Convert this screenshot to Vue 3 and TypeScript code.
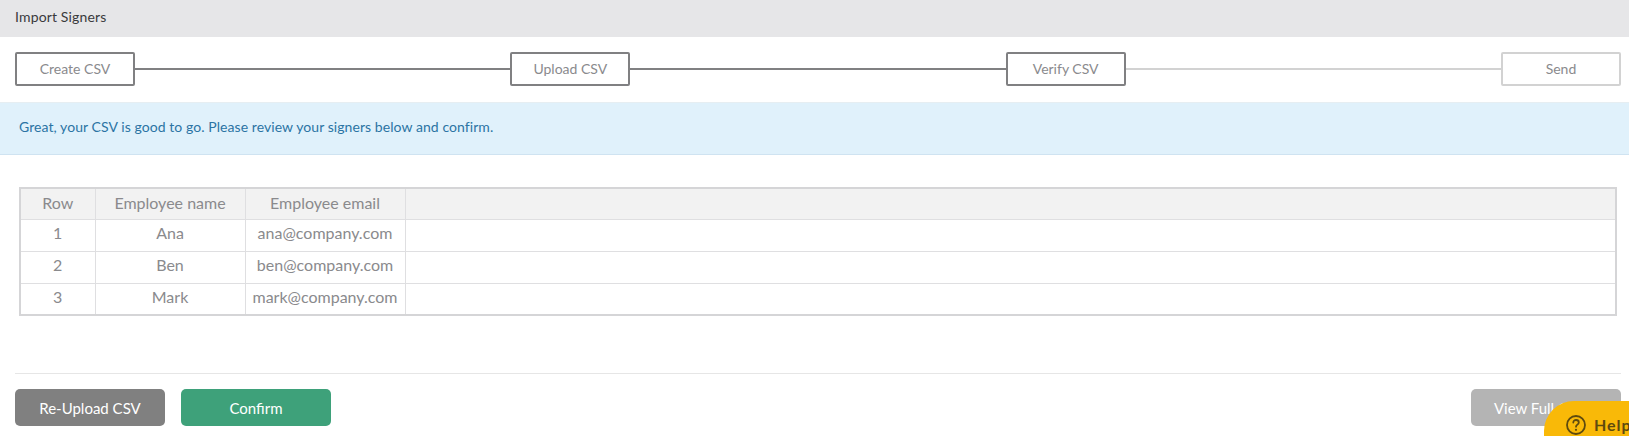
<script setup lang="ts">
interface StepItem { label: string; active: boolean; lineActive: boolean }
const steps: StepItem[] = [
  { label: 'Create CSV', active: true, lineActive: true },
  { label: 'Upload CSV', active: true, lineActive: true },
  { label: 'Verify CSV', active: true, lineActive: false },
  { label: 'Send', active: false, lineActive: false },
]
const rows = [
  { id: 1, name: 'Ana', email: 'ana@company.com' },
  { id: 2, name: 'Ben', email: 'ben@company.com' },
  { id: 3, name: 'Mark', email: 'mark@company.com' },
]
</script>

<template>
  <div class="page">
    <header class="title">Import Signers</header>
    <div class="stepper">
      <template v-for="(s, i) in steps" :key="s.label">
        <div class="step" :class="{ on: s.active }">{{ s.label }}</div>
        <div v-if="i < steps.length - 1" class="line" :class="{ on: s.lineActive }"></div>
      </template>
    </div>
    <div class="banner">Great, your CSV is good to go. Please review your signers below and confirm.</div>
    <div class="table-wrap">
      <table>
        <colgroup>
          <col class="c1" /><col class="c2" /><col class="c3" /><col />
        </colgroup>
        <thead>
          <tr><th>Row</th><th>Employee name</th><th>Employee email</th><th></th></tr>
        </thead>
        <tbody>
          <tr v-for="r in rows" :key="r.id">
            <td>{{ r.id }}</td><td>{{ r.name }}</td><td>{{ r.email }}</td><td></td>
          </tr>
        </tbody>
      </table>
    </div>
    <footer class="actions">
      <button class="btn grey">Re-Upload CSV</button>
      <button class="btn green">Confirm</button>
      <button class="btn light">View Full CSV</button>
    </footer>
    <div class="help">
      <svg width="22" height="22" viewBox="0 0 22 22" fill="none">
        <circle cx="11" cy="11" r="9" stroke="#5e4a0f" stroke-width="1.8" />
        <path d="M8.3 8.6c0-1.6 1.2-2.6 2.8-2.6 1.5 0 2.7 1 2.7 2.4 0 2.2-2.8 2.2-2.8 4.3" stroke="#5e4a0f" stroke-width="1.8" stroke-linecap="round" />
        <circle cx="11" cy="15.8" r="1.1" fill="#5e4a0f" />
      </svg>
      <span>Help</span>
    </div>
  </div>
</template>

<style>
html, body { margin: 0; background: #fff; overflow: hidden; }
</style>

<style scoped>
.page {
  position: relative;
  width: 1629px;
  height: 436px;
  overflow: hidden;
  font-family: Lato, "Liberation Sans", sans-serif;
  color: #8a8a8d;
  background: #fff;
}
.title {
  height: 37px;
  padding-left: 15px;
  background: #e6e6e8;
  color: #3a3a3c;
  font-size: 14px;
  letter-spacing: 0.15px;
  line-height: 33px;
  box-sizing: border-box;
}
.stepper {
  display: flex;
  align-items: center;
  padding: 15px 8px 16px 15px;
}
.step {
  width: 120px;
  height: 34px;
  box-sizing: border-box;
  flex: none;
  border: 2px solid #d2d2d2;
  border-radius: 2px;
  font-size: 14px;
  line-height: 29px;
  text-align: center;
}
.step.on { border-color: #808082; }
.line { flex: 1; height: 2px; background: #d2d2d2; }
.line.on { background: #808082; }
.banner {
  height: 53px;
  box-sizing: border-box;
  padding-left: 19px;
  background: #e0f1fb;
  border-top: 1px solid #e6eef2;
  border-bottom: 1px solid #cfe3f1;
  color: #2b74a4;
  font-size: 14px;
  letter-spacing: 0.07px;
  line-height: 47px;
}
.table-wrap { padding: 32px 12px 0 19px; }
table {
  width: 1598px;
  table-layout: fixed;
  border-collapse: collapse;
  border: 2px solid #d5d5d7;
  font-size: 16px;
  box-sizing: border-box;
}
.c1 { width: 75px; }
.c2 { width: 150px; }
.c3 { width: 160px; }
th, td {
  border: 1px solid #dfdfe1;
  padding: 0 0 3px;
  text-align: center;
  font-weight: 400;
  white-space: nowrap;
  color: #8a8a8d;
  box-sizing: border-box;
}
td { padding-bottom: 5px; }
th { background: #f2f2f2; height: 31px; }
td { height: 32px; }
.actions {
  display: flex;
  gap: 16px;
  margin: 57px 8px 0 15px;
  padding-top: 15px;
  border-top: 1px solid #e6e6e6;
}
.btn {
  width: 150px;
  height: 37px;
  border: 0;
  border-radius: 5px;
  padding: 0;
  color: #fff;
  font-family: inherit;
  font-size: 15px;
}
.grey { background: #808080; }
.green { background: #3ea17a; }
.light { background: #b4b4b4; margin-left: auto; padding-right: 12px; }
.help {
  position: absolute;
  left: 1544px;
  top: 401px;
  width: 110px;
  height: 60px;
  border-radius: 30px 0 0 0;
  background: #f9b908;
  display: flex;
  align-items: flex-start;
  gap: 7px;
  padding: 13px 0 0 21px;
  box-sizing: border-box;
  color: #5e4a0f;
  font-size: 16px;
  font-weight: 700;
  letter-spacing: 1px;
}
.help span { line-height: 22px; }
</style>
